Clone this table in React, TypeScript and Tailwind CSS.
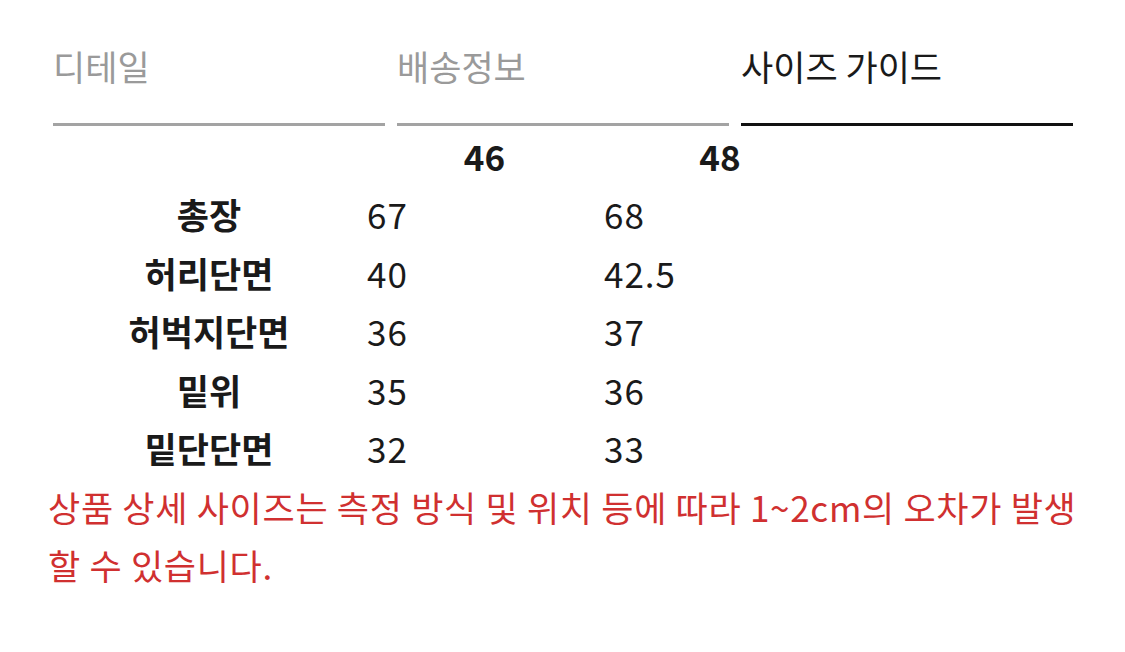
const font = { fontFamily: '"Noto Sans CJK KR", "Noto Sans", sans-serif' };

const tabs = [
  { label: '디테일', active: false },
  { label: '배송정보', active: false },
  { label: '사이즈 가이드', active: true },
];

const rows: [string, string, string][] = [
  ['총장', '67', '68'],
  ['허리단면', '40', '42.5'],
  ['허벅지단면', '36', '37'],
  ['밑위', '35', '36'],
  ['밑단단면', '32', '33'],
];

export default function App() {
  return (
    <div className="w-[1125px] h-[652px] bg-white overflow-hidden" style={font}>
      <div className="flex gap-[12px] pl-[53px]">
        {tabs.map((t) => (
          <div
            key={t.label}
            className={`w-[332px] h-[126px] pt-[42px] border-b-[3px] ${
              t.active ? 'border-[#111111]' : 'border-[#a3a3a3]'
            }`}
          >
            <span
              className={`block text-[35px] leading-[48px] ${
                t.active ? 'text-[#1a1a1a]' : 'text-[#9a9a9a]'
              }`}
            >
              {t.label}
            </span>
          </div>
        ))}
      </div>

      <table className="ml-[53px] mt-[1px] border-collapse text-[#1a1a1a]">
        <thead>
          <tr className="h-[58px]">
            <th className="w-[312px] p-0"></th>
            <th className="w-[239px] p-0 text-center text-[35px] font-bold leading-[58px]">46</th>
            <th className="w-[232px] p-0 text-center text-[35px] font-bold leading-[58px]">48</th>
          </tr>
        </thead>
        <tbody>
          {rows.map(([label, a, b]) => (
            <tr key={label} className="h-[58.5px]">
              <td className="p-0 text-center text-[35px] font-bold leading-[58px]">{label}</td>
              <td className="p-0 pl-[2px] text-left text-[35px] tracking-[1px] leading-[58px]">{a}</td>
              <td className="p-0 text-left text-[35px] tracking-[1px] leading-[58px]">{b}</td>
            </tr>
          ))}
        </tbody>
      </table>

      <p className="ml-[48px] mr-[45px] text-[35px] tracking-[0.7px] leading-[58px] text-[#d03030]">
        상품 상세 사이즈는 측정 방식 및 위치 등에 따라 1~2cm의 오차가 발생 할 수 있습니다.
      </p>
    </div>
  );
}
